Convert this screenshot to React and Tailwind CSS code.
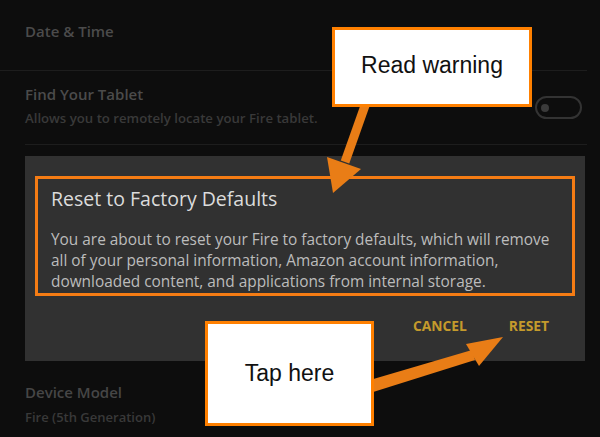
import React from "react";

const font = { fontFamily: '"Open Sans", "Noto Sans", sans-serif' };

const Callout = ({ text, className }) => (
  <div
    className={`absolute bg-white border-[3px] border-[#ff8000] flex items-center justify-center text-[23px] text-[#111] ${className}`}
    style={{ fontFamily: '"Liberation Sans", Arial, sans-serif' }}
  >
    {text}
  </div>
);

const App = () => {
  return (
    <div className="relative w-[600px] h-[437px] overflow-hidden bg-[#0d0d0d]" style={font}>
      {/* settings list */}
      <div className="h-[71px] pl-[25px] pt-[20px] border-b border-[#1d1d1d] mr-[13px]">
        <p className="text-[15px] leading-[22px] text-[#4b4b4b] font-semibold">Date &amp; Time</p>
      </div>
      <div className="h-[74px] ml-[25px] mr-[13px] flex justify-between items-start border-b border-[#1d1d1d]">
        <div className="pt-[12px]">
          <p className="text-[15px] leading-[22px] text-[#4b4b4b] font-semibold">Find Your Tablet</p>
          <p className="text-[13.2px] leading-[18px] mt-[4px] text-[#393939] font-semibold">
            Allows you to remotely locate your Fire tablet.
          </p>
        </div>
        <div className="self-center w-[47px] h-[23px] mr-[5px] rounded-full border-2 border-[#333] flex items-center pl-[4px]">
          <div className="w-[8px] h-[8px] rounded-full bg-[#3a3a3a]" />
        </div>
      </div>

      {/* dialog */}
      <div className="mt-[11px] ml-[25px] w-[560px] h-[205px] bg-[#313131] pt-[20px] px-[10px]">
        <div className="h-[120px] border-[3px] border-[#f57c14] px-[13px] pt-[8px]">
          <p className="text-[19.5px] leading-[24px] text-[#dcdcdc]">Reset to Factory Defaults</p>
          <p className="mt-[18px] text-[15.4px] leading-[21px] text-[#bcbcbc]">
            You are about to reset your Fire to factory defaults, which will remove
            <br />
            all of your personal information, Amazon account information,
            <br />
            downloaded content, and applications from internal storage.
          </p>
        </div>
        <div className="flex justify-end gap-[42px] mt-[21px] pr-[26px] text-[13.8px] leading-[18px] font-bold text-[#c49a2c]">
          <span>CANCEL</span>
          <span>RESET</span>
        </div>
      </div>

      <div className="pl-[25px] pt-[20px]">
        <p className="text-[15px] leading-[22px] text-[#464646] font-semibold">Device Model</p>
        <p className="text-[13px] leading-[20px] mt-[4px] text-[#393939] font-semibold">Fire (5th Generation)</p>
      </div>

      {/* annotation arrows */}
      <svg className="absolute inset-0 pointer-events-none" width="600" height="437" viewBox="0 0 600 437">
        <line x1="367" y1="100" x2="345" y2="162" stroke="#e97d16" strokeWidth="9" />
        <polygon points="327,157 361,169 333,193" fill="#e97d16" />
        <polygon points="370,380 472,350 475,360 370,393" fill="#e97d16" />
        <polygon points="466,344 479,366 503,337" fill="#e97d16" />
      </svg>

      <Callout text="Read warning" className="left-[332px] top-[27px] w-[200px] h-[80px] pb-[4px]" />
      <Callout text="Tap here" className="left-[205px] top-[321px] w-[169px] h-[105px]" />
    </div>
  );
};

export default App;
